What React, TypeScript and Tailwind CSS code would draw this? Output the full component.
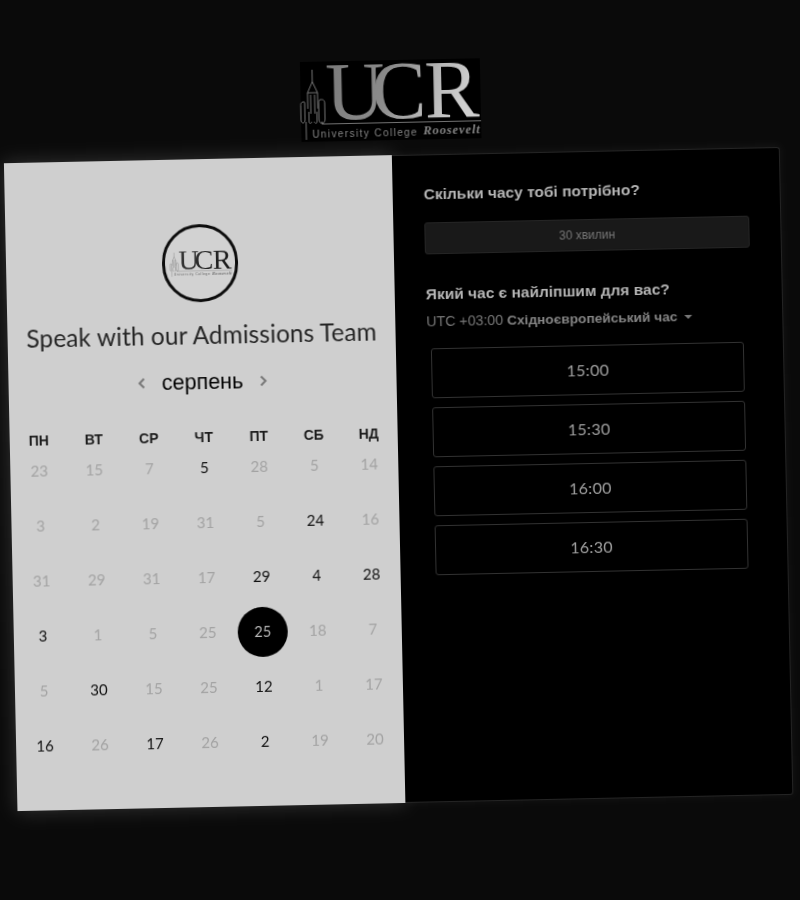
import React from "react";

function Logo({ dark, className }: { dark?: boolean; className?: string }) {
  const id = dark ? "ucrDark" : "ucrLight";
  const line = dark ? "#666" : "#808080";
  return (
    <svg viewBox="0 0 180 80" className={`overflow-visible ${className ?? ""}`}>
      <defs>
        <linearGradient id={id} x1="0" y1="0" x2="1" y2="0.25">
          {dark ? (
            <>
              <stop offset="0" stopColor="#3a3a3a" />
              <stop offset="1" stopColor="#1a1a1a" />
            </>
          ) : (
            <>
              <stop offset="0" stopColor="#777" />
              <stop offset="0.5" stopColor="#8c8c8c" />
              <stop offset="0.75" stopColor="#b5b5b5" />
              <stop offset="1" stopColor="#d0d0d0" />
            </>
          )}
        </linearGradient>
      </defs>
      <text
        x="25 71 124"
        y="58"
        fontFamily="'Liberation Serif', serif"
        fontSize="82"
        fill={`url(#${id})`}
      >
        UCR
      </text>
      <g fill="none" stroke={line} strokeWidth="0.9">
        <path d="M12 8V20M12 20L7 31H17L12 20" />
        <path d="M7 31V47M17 31V47M10 33V52M14 33V52" />
        <path d="M3 40C0 40 0 42 0 44V58C0 62 4 62 4 58V42C4 40 4 40 3 40Z" />
        <path d="M20 38C18 38 18 40 18 42V58C18 63 24 63 24 58V42C24 38 22 38 20 38Z" />
        <path d="M8 50V60C8 62 10 62 11 60M16 50V60C16 62 14 62 13 60" />
        <path d="M5 60V78" />
        <path d="M21 60V62.5H180" />
      </g>
      <text
        x="11"
        y="76"
        fontFamily="'Liberation Sans', sans-serif"
        fontSize="10"
        letterSpacing="1.4"
        fill={dark ? "#666" : "#858585"}
      >
        University College
      </text>
      <text
        x="122"
        y="75"
        fontFamily="'Liberation Serif', serif"
        fontSize="12.5"
        fontStyle="italic"
        fontWeight="700"
        letterSpacing="0.9"
        fill={dark ? "#666" : "#858585"}
      >
        Roosevelt
      </text>
    </svg>
  );
}

const heads = ["ПН", "ВТ", "СР", "ЧТ", "ПТ", "СБ", "НД"];

type Day = { n: number; on?: boolean; sel?: boolean };
const d = (n: number): Day => ({ n });
const a = (n: number): Day => ({ n, on: true });

const days: Day[] = [
  d(23), d(15), d(7), a(5), d(28), d(5), d(14),
  d(3), d(2), d(19), d(31), d(5), a(24), d(16),
  d(31), d(29), d(31), d(17), a(29), a(4), a(28),
  a(3), d(1), d(5), d(25), { n: 25, sel: true }, d(18), d(7),
  d(5), a(30), d(15), d(25), a(12), d(1), d(17),
  a(16), d(26), a(17), d(26), a(2), d(19), d(20),
];

const slots = ["15:00", "15:30", "16:00", "16:30"];

function Chevron({ left }: { left?: boolean }) {
  return (
    <svg viewBox="0 0 10 12" className="h-3 w-[10px]" fill="none" stroke="#777" strokeWidth="2">
      <path d={left ? "M7.5 1.5L3 6l4.5 4.5" : "M2.5 1.5L7 6l-4.5 4.5"} />
    </svg>
  );
}

export default function App() {
  return (
    <div className="h-[900px] w-[800px] overflow-hidden bg-[#0a0a0a]">
      <div className="flex h-[900px] w-[800px] rotate-[-1.2deg] flex-col items-center pr-1 pt-[60px] font-['Liberation_Sans',sans-serif] blur-[0.4px]">
        <div className="h-20 w-[180px] bg-black">
          <Logo className="h-20 w-[180px]" />
        </div>
        <div className="mt-[15px] flex h-[648px] w-[776px]">
          <div className="flex h-full w-[388px] flex-col items-center bg-[#cfcfcf] pt-[65px] shadow-[0_0_18px_rgba(255,255,255,0.18)]">
            <div className="flex h-[78px] w-[76px] items-center justify-center rounded-full border-[3px] border-[#0c0c0c] bg-[#d2d2d2]">
              <Logo dark className="ml-[1px] h-[32px] w-[62px]" />
            </div>
            <h1 className="mt-[16px] h-[34px] font-['Lato',sans-serif] text-[24.4px] leading-[34px] font-normal tracking-[0.1px] text-[#262626]">
              Speak with our Admissions Team
            </h1>
            <div className="mt-[14px] flex h-8 items-center gap-[15px]">
              <Chevron left />
              <span className="text-[21.5px] leading-8 text-black">серпень</span>
              <Chevron />
            </div>
            <div className="mt-[29px] grid h-5 w-[385px] grid-cols-7">
              {heads.map((h) => (
                <div key={h} className="text-center text-[14px] leading-5 font-bold text-[#1c1c1c]">
                  {h}
                </div>
              ))}
            </div>
            <div className="mt-[-7px] grid w-[385px] grid-cols-7 font-['Lato',sans-serif] text-[15px]">
              {days.map((x, i) => (
                <div key={i} className="flex h-[55px] items-center justify-center">
                  {x.sel ? (
                    <span className="flex h-[50px] w-[50px] items-center justify-center rounded-full bg-black text-[14.5px] text-[#b8b8b8]">
                      {x.n}
                    </span>
                  ) : (
                    <span className={x.on ? "text-[#111]" : "text-[#a3a3a3]"}>{x.n}</span>
                  )}
                </div>
              ))}
            </div>
          </div>
          <div className="h-full w-[388px] rounded-r-[3px] border border-l-0 border-[#242424] bg-black px-[31px] pt-[27px] shadow-[0_0_8px_rgba(255,255,255,0.05)]">
            <p className="text-[15.5px] leading-6 font-bold text-[#b5b5b5]">Скільки часу тобі потрібно?</p>
            <div className="mt-4 flex h-8 items-center justify-center rounded-[3px] border border-[#262626] bg-[#191919] text-[12px] text-[#777]">
              30 хвилин
            </div>
            <p className="mt-7 text-[15.5px] leading-6 font-bold text-[#b5b5b5]">Який час є найліпшим для вас?</p>
            <div className="mt-[6px] flex h-5 items-center text-[14.2px] text-[#777]">
              <span>UTC +03:00&nbsp;</span>
              <span className="text-[13.7px] font-bold text-[#858585]">Східноєвропейський час</span>
              <span className="ml-[7px] h-0 w-0 border-x-[4px] border-t-[4px] border-x-transparent border-t-[#777]" />
            </div>
            <div className="mt-4 ml-1 flex w-[313px] flex-col gap-[9px]">
              {slots.map((s) => (
                <div
                  key={s}
                  className="flex h-[50px] items-center justify-center rounded-[3px] border border-[#333] font-['Lato',sans-serif] text-[16px] tracking-[0.3px] text-[#a0a0a0]"
                >
                  {s}
                </div>
              ))}
            </div>
          </div>
        </div>
      </div>
    </div>
  );
}
